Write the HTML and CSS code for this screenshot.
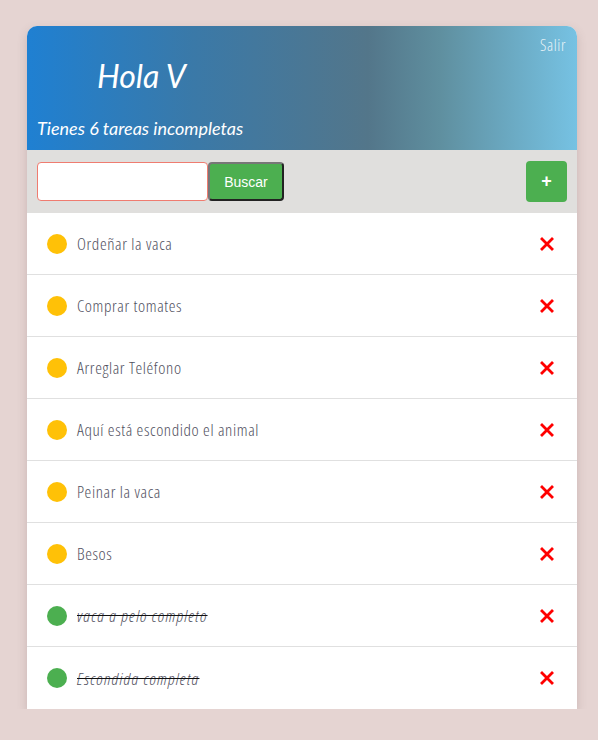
FILE: index.html
```html
<!DOCTYPE html>
<html lang="es">
<head>
<meta charset="utf-8">
<title>Tareas</title>
<link rel="stylesheet" href="styles.css">
</head>
<body>
<main class="card">
  <header class="header">
    <div class="header-top"><a class="logout">Salir</a></div>
    <h1 class="title">Hola V</h1>
    <p class="subtitle">Tienes 6 tareas incompletas</p>
  </header>
  <div class="toolbar">
    <input class="search" type="text">
    <button class="btn-search">Buscar</button>
    <button class="btn-add">+</button>
  </div>
  <ul class="tasks">
    <li class="task"><span class="dot pending"></span><span class="label">Ordeñar la vaca</span><span class="del"><svg viewBox="0 0 14 14" width="14" height="14"><path d="M2 2L12 12M12 2L2 12" stroke="#f00" stroke-width="2.8" stroke-linecap="square"/></svg></span></li>
    <li class="task"><span class="dot pending"></span><span class="label">Comprar tomates</span><span class="del"><svg viewBox="0 0 14 14" width="14" height="14"><path d="M2 2L12 12M12 2L2 12" stroke="#f00" stroke-width="2.8" stroke-linecap="square"/></svg></span></li>
    <li class="task"><span class="dot pending"></span><span class="label">Arreglar Teléfono</span><span class="del"><svg viewBox="0 0 14 14" width="14" height="14"><path d="M2 2L12 12M12 2L2 12" stroke="#f00" stroke-width="2.8" stroke-linecap="square"/></svg></span></li>
    <li class="task"><span class="dot pending"></span><span class="label">Aquí está escondido el animal</span><span class="del"><svg viewBox="0 0 14 14" width="14" height="14"><path d="M2 2L12 12M12 2L2 12" stroke="#f00" stroke-width="2.8" stroke-linecap="square"/></svg></span></li>
    <li class="task"><span class="dot pending"></span><span class="label">Peinar la vaca</span><span class="del"><svg viewBox="0 0 14 14" width="14" height="14"><path d="M2 2L12 12M12 2L2 12" stroke="#f00" stroke-width="2.8" stroke-linecap="square"/></svg></span></li>
    <li class="task"><span class="dot pending"></span><span class="label">Besos</span><span class="del"><svg viewBox="0 0 14 14" width="14" height="14"><path d="M2 2L12 12M12 2L2 12" stroke="#f00" stroke-width="2.8" stroke-linecap="square"/></svg></span></li>
    <li class="task"><span class="dot done"></span><span class="label completed">vaca a pelo completo</span><span class="del"><svg viewBox="0 0 14 14" width="14" height="14"><path d="M2 2L12 12M12 2L2 12" stroke="#f00" stroke-width="2.8" stroke-linecap="square"/></svg></span></li>
    <li class="task"><span class="dot done"></span><span class="label completed">Escondida completa</span><span class="del"><svg viewBox="0 0 14 14" width="14" height="14"><path d="M2 2L12 12M12 2L2 12" stroke="#f00" stroke-width="2.8" stroke-linecap="square"/></svg></span></li>
  </ul>
</main>
</body>
</html>
```
FILE: styles.css
```css
* { box-sizing: border-box; }
html, body { margin: 0; padding: 0; }
body {
  background: #e5d4d2;
  padding: 26px 0 0 27px;
  font-family: "Open Sans", Roboto, sans-serif;
}
.card {
  width: 550px;
  background: #fff;
  border-radius: 10px 10px 0 0;
  box-shadow: 0 4px 10px rgba(120, 90, 90, 0.25);
}
.header {
  height: 124px;
  border-radius: 10px 10px 0 0;
  background: linear-gradient(to right, #1f80d2 0%, #3a79a8 30%, #53768a 62%, #5f8f9f 75%, #76c2e3 100%);
  padding: 10px 11px 0 10px;
  display: flex;
  flex-direction: column;
  color: #fff;
}
.header-top {
  display: flex;
  justify-content: flex-end;
  height: 18px;
}
.logout {
  font-size: 16px;
  line-height: 18px;
  font-weight: 300;
  letter-spacing: 0.6px;
  color: rgba(255, 255, 255, 0.85);
  font-stretch: 75%;
  cursor: pointer;
}
.title {
  margin: 2px 0 0 60px;
  font-family: Lato, sans-serif;
  font-style: italic;
  font-weight: 400;
  font-size: 32px;
  line-height: 40px;
}
.subtitle {
  margin: 21px 0 0 0;
  font-family: Lato, sans-serif;
  font-style: italic;
  font-size: 18px;
  line-height: 22px;
}
.toolbar {
  height: 63px;
  background: #e0dfdd;
  display: flex;
  align-items: center;
  padding: 0 10px;
}
.search {
  width: 171px;
  height: 39px;
  border: 1px solid #ef7c70;
  border-radius: 4px;
  background: #fff;
  margin: 0;
}
.btn-search {
  width: 76px;
  height: 39px;
  margin: 0;
  background: #4caf50;
  color: #fff;
  border: 2px solid;
  border-color: #777 #222 #222 #777;
  border-radius: 4px;
  font-family: "Liberation Sans", Arial, sans-serif;
  font-size: 14px;
}
.btn-add {
  margin-left: auto;
  width: 41px;
  height: 41px;
  background: #4caf50;
  color: #fff;
  border: none;
  border-radius: 4px;
  font-family: "Liberation Sans", Arial, sans-serif;
  font-weight: bold;
  font-size: 18px;
  padding: 0;
}
.tasks {
  list-style: none;
  margin: 0;
  padding: 0;
}
.task {
  height: 62px;
  display: flex;
  align-items: center;
  padding: 0 23px 0 20px;
  border-bottom: 1px solid #e0e0e0;
}
.task:last-child { border-bottom: none; }
.dot {
  width: 20px;
  height: 20px;
  border-radius: 50%;
  flex: none;
}
.dot.pending { background: #ffc107; }
.dot.done { background: #4caf50; }
.label {
  margin-left: 10px;
  font-size: 17px;
  font-weight: 300;
  font-stretch: 75%;
  letter-spacing: 0.6px;
  color: #50505e;
  flex: 1;
}
.label.completed {
  font-style: italic;
  letter-spacing: 1.2px;
  text-decoration: line-through;
  text-decoration-color: #111;
}
.del {
  width: 14px;
  height: 14px;
  display: flex;
}
```
